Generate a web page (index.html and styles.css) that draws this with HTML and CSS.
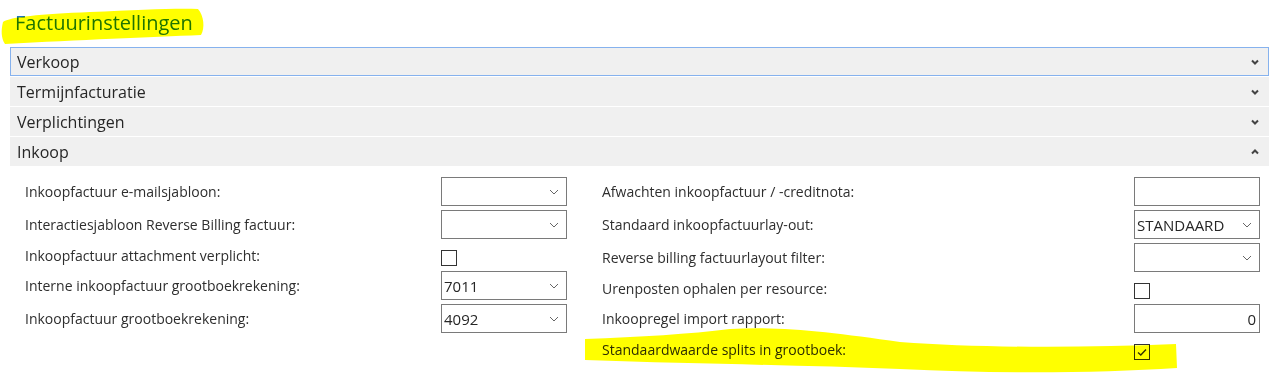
FILE: index.html
```html
<!DOCTYPE html>
<html lang="nl">
<head>
    <meta charset="UTF-8">
    <title>Factuurinstellingen</title>
    <link rel="stylesheet" href="styles.css">
</head>
<body>

    <div class="page">
        <h1 class="page-title">Factuurinstellingen</h1>

        <div class="accordion">
            <div class="fasttab is-focused">
                <span>Verkoop</span>
                <svg class="tab-chevron" width="8" height="6" viewBox="0 0 8 6"><polyline points="1,1.5 4,4.5 7,1.5"/></svg>
            </div>
            <div class="fasttab">
                <span>Termijnfacturatie</span>
                <svg class="tab-chevron" width="8" height="6" viewBox="0 0 8 6"><polyline points="1,1.5 4,4.5 7,1.5"/></svg>
            </div>
            <div class="fasttab">
                <span>Verplichtingen</span>
                <svg class="tab-chevron" width="8" height="6" viewBox="0 0 8 6"><polyline points="1,1.5 4,4.5 7,1.5"/></svg>
            </div>
            <div class="fasttab">
                <span>Inkoop</span>
                <svg class="tab-chevron" width="8" height="6" viewBox="0 0 8 6"><polyline points="1,4.5 4,1.5 7,4.5"/></svg>
            </div>

            <!-- Inkoop fields -->
            <div class="fasttab-body">
                <div class="field-col">
                    <div class="field">
                        <label>Inkoopfactuur e-mailsjabloon:</label>
                        <div class="input">
                            <span></span>
                            <svg class="drop" width="10" height="6" viewBox="0 0 10 6"><polyline points="1,1 5,5 9,1"/></svg>
                        </div>
                    </div>
                    <div class="field">
                        <label>Interactiesjabloon Reverse Billing factuur:</label>
                        <div class="input">
                            <span></span>
                            <svg class="drop" width="10" height="6" viewBox="0 0 10 6"><polyline points="1,1 5,5 9,1"/></svg>
                        </div>
                    </div>
                    <div class="field is-check">
                        <label>Inkoopfactuur attachment verplicht:</label>
                        <div class="check-cell"><span class="checkbox"></span></div>
                    </div>
                    <div class="field">
                        <label>Interne inkoopfactuur grootboekrekening:</label>
                        <div class="input">
                            <span>7011</span>
                            <svg class="drop" width="10" height="6" viewBox="0 0 10 6"><polyline points="1,1 5,5 9,1"/></svg>
                        </div>
                    </div>
                    <div class="field">
                        <label>Inkoopfactuur grootboekrekening:</label>
                        <div class="input">
                            <span>4092</span>
                            <svg class="drop" width="10" height="6" viewBox="0 0 10 6"><polyline points="1,1 5,5 9,1"/></svg>
                        </div>
                    </div>
                </div>

                <div class="field-col">
                    <div class="field">
                        <label>Afwachten inkoopfactuur / -creditnota:</label>
                        <div class="input"></div>
                    </div>
                    <div class="field">
                        <label>Standaard inkoopfactuurlay-out:</label>
                        <div class="input">
                            <span>STANDAARD</span>
                            <svg class="drop" width="10" height="6" viewBox="0 0 10 6"><polyline points="1,1 5,5 9,1"/></svg>
                        </div>
                    </div>
                    <div class="field">
                        <label>Reverse billing factuurlayout filter:</label>
                        <div class="input">
                            <span></span>
                            <svg class="drop" width="10" height="6" viewBox="0 0 10 6"><polyline points="1,1 5,5 9,1"/></svg>
                        </div>
                    </div>
                    <div class="field is-check">
                        <label>Urenposten ophalen per resource:</label>
                        <div class="check-cell"><span class="checkbox"></span></div>
                    </div>
                    <div class="field">
                        <label>Inkoopregel import rapport:</label>
                        <div class="input is-number"><span>0</span></div>
                    </div>
                    <div class="field is-check">
                        <label>Standaardwaarde splits in grootboek:</label>
                        <div class="check-cell">
                            <span class="checkbox">
                                <svg width="14" height="14" viewBox="0 0 14 14"><polyline points="3,7.5 5.8,10 11,4.5"/></svg>
                            </span>
                        </div>
                    </div>
                </div>
            </div>
        </div>

        <!-- Marker strokes drawn over the screenshot -->
        <svg class="marker" width="1277" height="375" viewBox="0 0 1277 375">
            <path d="M3,22 C10,17 40,14 90,12 C140,10 175,8 198,9 C204,16 205,28 201,35 C150,37 80,40 5,44 C1,38 1,30 3,22 Z"/>
            <path d="M585,339 C640,337 690,334 730,329 C780,326 830,332 900,342 C980,348 1080,348 1176,344 L1177,368 C1100,373 1000,374 900,369 C800,365 700,364 585,360 Z"/>
        </svg>
    </div>

</body>
</html>
```

FILE: styles.css
```css
* {
    box-sizing: border-box;
}

body {
    margin: 0;
    font-family: "Open Sans", "Noto Sans", sans-serif;
    color: #262626;
    background: #fff;
}

.page {
    position: relative;
    height: 375px;
    overflow: hidden;
    padding: 0 8px 0 10px;
}

.page-title {
    margin: 0;
    height: 47px;
    padding: 8px 0 0 5px;
    font-size: 20px;
    font-weight: 400;
    line-height: 30px;
    color: #1f74c6;
}

/* Fasttab headers */
.fasttab {
    display: flex;
    align-items: center;
    justify-content: space-between;
    height: 29px;
    margin-bottom: 1px;
    padding: 0 10px 0 7px;
    background: #f0f0f0;
    font-size: 16px;
    color: #262626;
}

.fasttab.is-focused {
    box-shadow: inset 0 0 0 1px #86b2ee;
}

.tab-chevron polyline {
    fill: none;
    stroke: #444;
    stroke-width: 2;
}

/* Fasttab content */
.fasttab-body {
    display: grid;
    grid-template-columns: 542px 658px;
    column-gap: 35px;
    padding: 10px 9px 0 15px;
}

.field-col {
    display: flex;
    flex-direction: column;
    gap: 4px;
}

.field {
    display: flex;
    align-items: center;
    justify-content: space-between;
    height: 29px;
    font-size: 14px;
    color: #2e2e2e;
}

.field.is-check {
    height: 24px;
}

.input {
    display: flex;
    align-items: center;
    justify-content: space-between;
    width: 126px;
    height: 29px;
    padding: 0 7px 0 2px;
    border: 1px solid #7a7a7a;
    font-size: 15px;
    color: #262626;
}

.input.is-number {
    justify-content: flex-end;
    padding-right: 3px;
}

.drop polyline {
    fill: none;
    stroke: #666;
    stroke-width: 1;
}

.check-cell {
    width: 126px;
    height: 24px;
    display: flex;
    align-items: flex-end;
    padding-bottom: 1px;
}

.checkbox {
    display: block;
    width: 16px;
    height: 16px;
    border: 1px solid #333;
}

.checkbox svg {
    display: block;
}

.checkbox polyline {
    fill: none;
    stroke: #333;
    stroke-width: 1.4;
}

.marker {
    position: absolute;
    top: 0;
    left: 0;
    pointer-events: none;
    mix-blend-mode: multiply;
}

.marker path {
    fill: #ffff00;
}
```
